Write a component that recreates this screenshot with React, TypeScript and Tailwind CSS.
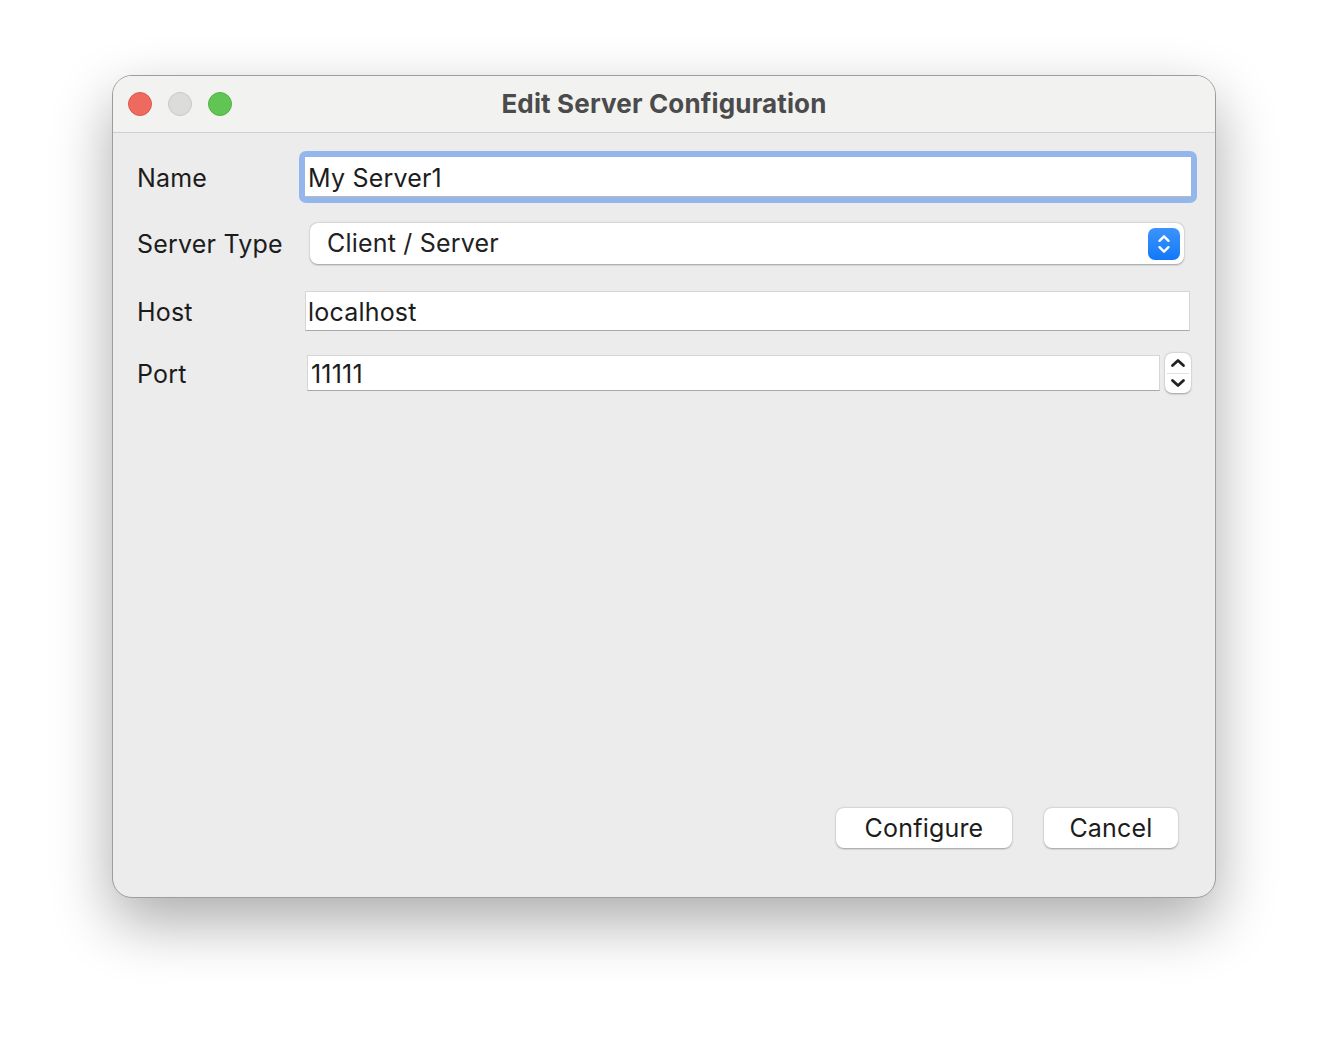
import React from "react";

function Chevrons({ className = "" }: { className?: string }) {
  return (
    <svg viewBox="0 0 20 28" className={className} fill="none" stroke="currentColor" strokeWidth="2.6" strokeLinecap="round" strokeLinejoin="round">
      <path d="M5 10.5 L10 5.5 L15 10.5" />
      <path d="M5 17.5 L10 22.5 L15 17.5" />
    </svg>
  );
}

export default function App() {
  const font = { fontFamily: "Inter, 'Noto Sans', 'Liberation Sans', sans-serif" };
  return (
    <div className="w-[1328px] h-[1046px] bg-white pl-[112px] pt-[75px]" style={font}>
      <div className="w-[1104px] h-[823px] rounded-[20px] bg-[#ececec] border border-[#9d9d9d] shadow-[0_24px_60px_rgba(0,0,0,0.33)] flex flex-col overflow-hidden">
        {/* title bar */}
        <div className="relative h-[57px] shrink-0 bg-[#f2f2f1] border-b border-[#cfcfcf] flex items-center justify-center">
          <div className="absolute left-[15px] top-[16px] flex gap-[16px]">
            <div className="w-[24px] h-[24px] rounded-full bg-[#ee6a5f] border border-[#d85a50]" />
            <div className="w-[24px] h-[24px] rounded-full bg-[#dcdcdb] border border-[#c8c8c7]" />
            <div className="w-[24px] h-[24px] rounded-full bg-[#61c554] border border-[#52b046]" />
          </div>
          <div className="text-[26px] font-bold text-[#4b4b4b] tracking-[0.15px] -mt-[2px]">Edit Server Configuration</div>
        </div>

        {/* body */}
        <div className="flex-1 flex flex-col pl-[24px] pr-[18px] pt-[18px] pb-[49px] text-[25px] text-[#1c1c1c] tracking-[0.2px]">
          {/* Name */}
          <div className="flex items-center h-[52px]">
            <div className="w-[162px] pt-[4px]">Name</div>
            <div className="flex-1 h-[52px] rounded-[7px] bg-[#93b7ec] p-[6px]">
              <div className="h-full bg-white border-b border-[#b9b9b9] flex items-center pl-[3px] pt-[3px] leading-none">My Server1</div>
            </div>
          </div>

          {/* Server type */}
          <div className="flex items-center h-[41px] mt-[20px]">
            <div className="w-[162px] pt-[3px]">Server Type</div>
            <div className="flex-1 ml-[11px] mr-[13px] h-[41px] rounded-[8px] bg-white shadow-[0_0.5px_2px_rgba(0,0,0,0.35)] flex items-center pl-[17px] pr-[4px]">
              <span className="flex-1 text-[#222] pt-[1px]">Client / Server</span>
              <div className="w-[32px] h-[32px] rounded-[7px] bg-gradient-to-b from-[#3b94fb] to-[#0f78f8] text-white flex items-center justify-center">
                <Chevrons className="w-[18px] h-[26px]" />
              </div>
            </div>
          </div>

          {/* Host */}
          <div className="flex items-center h-[40px] mt-[27px]">
            <div className="w-[162px] pt-[3px]">Host</div>
            <div className="flex-1 ml-[6px] mr-[7px] h-[40px] bg-white border border-[#d6d6d6] border-b-[#a9a9a9] flex items-center pl-[2px] pt-[3px]">localhost</div>
          </div>

          {/* Port */}
          <div className="flex items-center h-[40px] mt-[22px]">
            <div className="w-[162px] pt-[3px]">Port</div>
            <div className="flex-1 ml-[8px] h-[36px] bg-white border border-[#d6d6d6] border-b-[#a9a9a9] flex items-center pl-[3px] pt-[3px]">11111</div>
            <div className="ml-[5px] mr-[6px] w-[26px] h-[40px] rounded-[7px] bg-white shadow-[0_0.5px_2px_rgba(0,0,0,0.35)] flex flex-col items-center text-[#222]">
              <svg viewBox="0 0 26 20" className="w-[26px] h-[20px]" fill="none" stroke="currentColor" strokeWidth="2.8" strokeLinecap="round" strokeLinejoin="round">
                <path d="M7.5 12.5 L13 7.5 L18.5 12.5" />
              </svg>
              <div className="w-[22px] h-px bg-[#e2e2e2]" />
              <svg viewBox="0 0 26 19" className="w-[26px] h-[19px]" fill="none" stroke="currentColor" strokeWidth="2.8" strokeLinecap="round" strokeLinejoin="round">
                <path d="M7.5 6.5 L13 11.5 L18.5 6.5" />
              </svg>
            </div>
          </div>

          <div className="flex-1" />

          {/* Buttons */}
          <div className="flex justify-end gap-[32px] pr-[19px]">
            <button className="w-[176px] h-[40px] rounded-[8px] bg-white shadow-[0_0.5px_2px_rgba(0,0,0,0.35)] text-[#1c1c1c] text-[25px] leading-none tracking-[0.2px]">Configure</button>
            <button className="w-[134px] h-[40px] rounded-[8px] bg-white shadow-[0_0.5px_2px_rgba(0,0,0,0.35)] text-[#1c1c1c] text-[25px] leading-none tracking-[0.2px]">Cancel</button>
          </div>
        </div>
      </div>
    </div>
  );
}
